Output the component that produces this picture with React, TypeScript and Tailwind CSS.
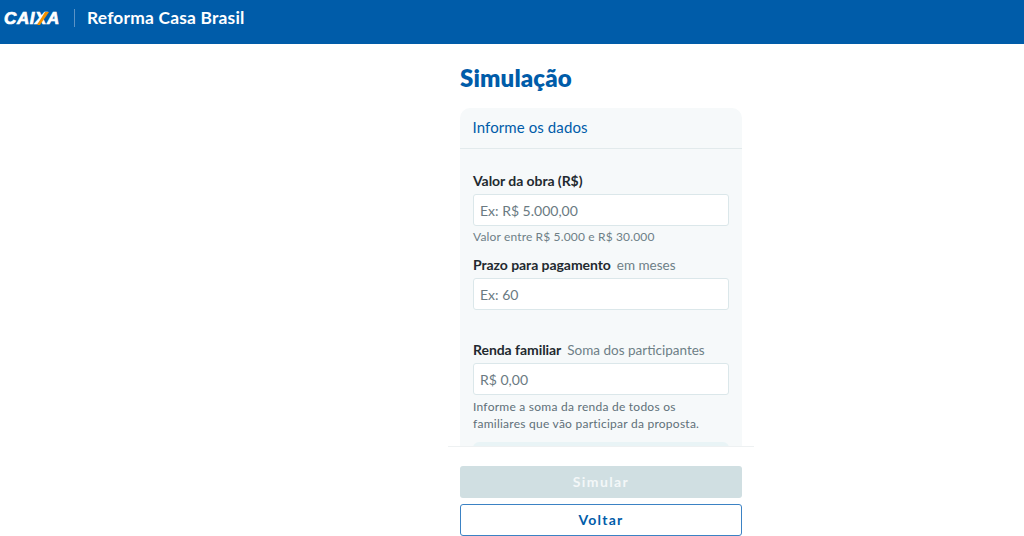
const fontStack = "font-['Lato','Noto_Sans',sans-serif]";

function CaixaLogo() {
  return (
    <div className="relative flex h-5 w-[60px] items-center">
      <span className="font-['Liberation_Sans',sans-serif] text-[17px] font-bold italic leading-none tracking-[0.6px] text-white [-webkit-text-stroke:0.7px_white]">
        CAIXA
      </span>
      <svg className="absolute left-[33px] top-[4px]" width="12" height="13" viewBox="0 0 12 13">
        <path d="M0 13 L8 0 L12 0 L3 13 Z" fill="#f39200" />
      </svg>
    </div>
  );
}

function Field({
  label,
  note,
  placeholder,
  children
}: {
  readonly label: string;
  readonly note?: string;
  readonly placeholder: string;
  readonly children?: React.ReactNode;
}) {
  return (
    <div>
      <div className="flex h-[20px] items-center gap-[6px] text-[14px] leading-5">
        <span className="font-bold tracking-[-0.06px] text-[#1f2a30]">{label}</span>
        {note && <span className="text-[13.5px] text-[#6e7f87]">{note}</span>}
      </div>
      <input
        className="mt-[3px] block h-[32px] w-full rounded-[3px] border border-[#dbe7ea] bg-white px-[6px] text-[14px] placeholder:text-[#6a7a82]"
        placeholder={placeholder}
        readOnly
      />
      {children}
    </div>
  );
}

export default function App() {
  return (
    <div className={`flex h-screen flex-col overflow-hidden bg-white ${fontStack}`}>
      <header className="flex h-[44px] shrink-0 items-center bg-[#005ca9] pb-[8px] pl-[4px]">
        <CaixaLogo />
        <div className="ml-[10px] h-[18px] w-px bg-[#5b93c6]" />
        <span className="ml-[12px] text-[17.4px] font-bold tracking-[0.2px] text-white">Reforma Casa Brasil</span>
      </header>

      <main className="ml-[448px] w-[306px] flex-1 overflow-hidden px-[12px]">
        <h1 className="mt-[19px] h-[30px] text-[24px] font-extrabold leading-[30px] tracking-[0.15px] text-[#005ca9]">Simulação</h1>
        <section className="mt-[15px] rounded-t-[10px] bg-[#f6f9fa]">
          <div className="flex h-[41px] items-center border-b border-[#e2eaec] pb-[2px] pl-[12.5px] text-[15px] tracking-[0.1px] text-[#005ca9]">
            Informe os dados
          </div>
          <div className="px-[13px] pt-[22px]">
            <Field label="Valor da obra (R$)" placeholder="Ex: R$ 5.000,00">
              <p className="mt-[3px] text-[12px] leading-4 tracking-[0.15px] text-[#6e7f87]">Valor entre R$ 5.000 e R$ 30.000</p>
            </Field>
            <div className="mt-[10px]">
              <Field label="Prazo para pagamento" note="em meses" placeholder="Ex: 60" />
            </div>
            <div className="mt-[30px]">
              <Field label="Renda familiar" note="Soma dos participantes" placeholder="R$ 0,00">
                <p className="mt-[3px] text-[12px] leading-[17px] tracking-[0.25px] text-[#5f7079]">
                  Informe a soma da renda de todos os
                  <br />
                  familiares que vão participar da proposta.
                </p>
              </Field>
            </div>
            <div className="mt-[10px] h-10 rounded-t-[6px] bg-[#e9f4f6]" />
          </div>
        </section>
      </main>

      <footer className="ml-[448px] flex h-[90px] w-[306px] shrink-0 flex-col gap-[6px] border-t border-[#eef1f2] bg-white px-[12px] pt-[19px]">
        <button className="h-[32px] rounded-[3px] bg-[#d0dfe2] pb-[2px] text-[14px] font-bold tracking-[1.4px] text-[#f3f7f8]">Simular</button>
        <button className="h-[32px] rounded-[3px] border border-[#3b82c4] bg-white pb-[2px] text-[14px] font-bold tracking-[1.2px] text-[#005ca9]">Voltar</button>
      </footer>
    </div>
  );
}
